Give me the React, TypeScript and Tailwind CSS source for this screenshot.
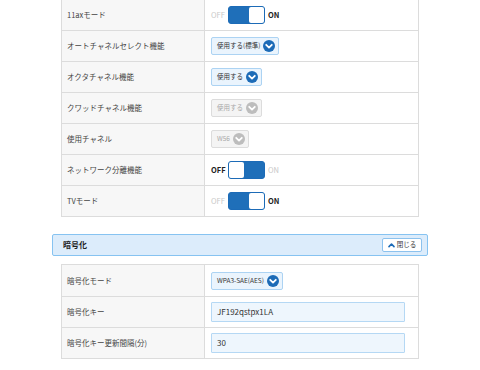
import React from 'react';

const font = { fontFamily: '"Noto Sans CJK JP", "Noto Sans", sans-serif' };

const ChevronCircle = ({ disabled = false }: { disabled?: boolean }) => (
  <svg width="12" height="12" viewBox="0 0 12 12" className="shrink-0">
    <circle cx="6" cy="6" r="6" fill={disabled ? '#bdbdbd' : '#1c6bb7'} />
    <path d="M3.2 4.8 L6 7.6 L8.8 4.8" fill="none" stroke="#fff" strokeWidth="1.8" strokeLinecap="round" strokeLinejoin="round" />
  </svg>
);

const Toggle = ({ on }: { on: boolean }) => (
  <div className="flex items-center">
    <span className={`text-[7.5px] w-[17px] ${on ? 'text-[#c8c8c8]' : 'text-[#222] font-bold'}`}>OFF</span>
    <div
      className={`w-[37px] h-[18px] rounded-[3px] border-[1.5px] border-[#1c6bb7] bg-[#1f6fb9] flex ${
        on ? 'justify-end' : 'justify-start'
      }`}
    >
      <div className="w-[15px] h-full bg-white rounded-[2px]" />
    </div>
    <span className={`text-[7.5px] ml-[3px] ${on ? 'text-[#222] font-bold' : 'text-[#c8c8c8]'}`}>ON</span>
  </div>
);

const Select = ({ text, disabled = false }: { text: string; disabled?: boolean }) => (
  <div
    className={`inline-flex items-center gap-[3px] h-[18px] pl-[5px] pr-[3px] rounded-[2px] border ${
      disabled ? 'bg-[#f4f4f4] border-[#dcdcdc] text-[#a8a8a8]' : 'bg-[#eaf4fd] border-[#acd3f3] text-[#333]'
    }`}
  >
    <span className="text-[6.5px]">{text}</span>
    <ChevronCircle disabled={disabled} />
  </div>
);

const TextInput = ({ value }: { value: string }) => (
  <div className="w-[194px] h-[20px] flex items-center px-[5px] bg-[#eef6fd] border border-[#b5d8f4] rounded-[1px] text-[8px] text-[#333]">
    {value}
  </div>
);

type Row = { label: string; value: React.ReactNode };

const Table = ({ rows, className = '' }: { rows: Row[]; className?: string }) => (
  <div className={`mx-[9px] border border-[#dcdcdc] ${className}`}>
    {rows.map((r, i) => (
      <div key={i} className={`flex h-[31px] ${i > 0 ? 'border-t border-[#dcdcdc]' : ''}`}>
        <div className="w-[143px] shrink-0 bg-[#f7f7f7] border-r border-[#dcdcdc] flex items-center pl-[5px] text-[7.5px] text-[#444]">
          {r.label}
        </div>
        <div className="flex-1 flex items-center pl-[6px]">{r.value}</div>
      </div>
    ))}
  </div>
);

export default function App() {
  const wifiRows: Row[] = [
    { label: '11axモード', value: <Toggle on /> },
    { label: 'オートチャネルセレクト機能', value: <Select text="使用する(標準)" /> },
    { label: 'オクタチャネル機能', value: <Select text="使用する" /> },
    { label: 'クワッドチャネル機能', value: <Select text="使用する" disabled /> },
    { label: '使用チャネル', value: <Select text="W56" disabled /> },
    { label: 'ネットワーク分離機能', value: <Toggle on={false} /> },
    { label: 'TVモード', value: <Toggle on /> },
  ];

  const encRows: Row[] = [
    { label: '暗号化モード', value: <Select text="WPA3-SAE(AES)" /> },
    { label: '暗号化キー', value: <TextInput value="JF192qstpx1LA" /> },
    { label: '暗号化キー更新間隔(分)', value: <TextInput value="30" /> },
  ];

  return (
    <div className="w-[480px] h-[370px] bg-white overflow-hidden" style={font}>
      <div className="w-[376px] ml-[52px]">
        <Table rows={wifiRows} className="-mt-[2px]" />

        <div className="mt-[17px] h-[22px] bg-[#dcecfb] border-[1.5px] border-[#86c3f1] rounded-[2px] flex items-center justify-between pl-[10px] pr-[5px]">
          <span className="text-[8px] font-bold text-[#222]">暗号化</span>
          <button className="w-[40px] h-[14px] bg-white border border-[#8cc2ee] rounded-[2px] flex items-center justify-center gap-[2px]">
            <svg width="7" height="6" viewBox="0 0 7 6">
              <path d="M1 4.6 L3.5 2 L6 4.6" fill="none" stroke="#1c6bb7" strokeWidth="1.6" strokeLinecap="round" strokeLinejoin="round" />
            </svg>
            <span className="text-[6.5px] text-[#333]">閉じる</span>
          </button>
        </div>

        <Table rows={encRows} className="mt-[8px]" />
      </div>
    </div>
  );
}
